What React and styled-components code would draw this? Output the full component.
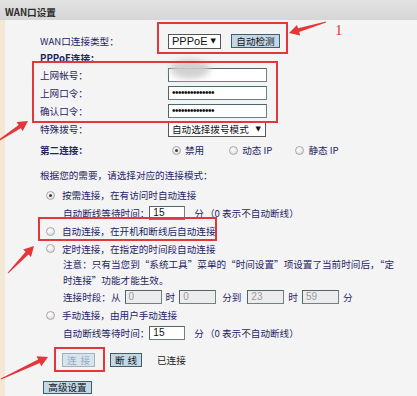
import React from "react";
import styled, { createGlobalStyle } from "styled-components";

const Global = createGlobalStyle`
  html, body { margin: 0; padding: 0; background: #f4f4f4; }
  * { box-sizing: border-box; }
`;

const FONT = `"Noto Sans CJK SC", "Noto Sans", sans-serif`;
const NAVY = "#1f2566";
const RED = "#e3373c";

const Page = styled.div`
  position: relative;
  width: 417px;
  height: 396px;
  overflow: hidden;
  background: #f4f4f4;
  font-family: ${FONT};
  font-size: 9.6px;
  color: ${NAVY};
`;

const Header = styled.div`
  height: 20px;
  padding: 3px 0 0 5px;
  display: flex;
  align-items: center;
  background: linear-gradient(#e2e2e2, #d6d6d6);
  color: #2b2b2b;
  font-weight: bold;
`;

const Body = styled.div`
  display: flex;
  flex-direction: column;
  border-left: 5px solid #f5e7d6;
  padding: 12px 0 0 35px;
  height: 376px;
`;

const Row = styled.div`
  display: flex;
  align-items: center;
  height: ${(p) => p.$h || 18}px;
  margin-top: ${(p) => p.$mt || 0}px;
  padding-left: ${(p) => p.$indent || 0}px;
  gap: ${(p) => p.$gap || 0}px;
  white-space: nowrap;
`;

const Label = styled.span`
  width: 128px;
  flex-shrink: 0;
  font-weight: ${(p) => (p.$bold ? "bold" : "normal")};
`;

const TextInput = styled.div`
  width: ${(p) => p.$w}px;
  height: 14px;
  flex-shrink: 0;
  background: ${(p) => (p.$disabled ? "#ececec" : "#ffffff")};
  border: 1px solid #6b8383;
  border-top-color: #4f6767;
  border-left-color: #4f6767;
  color: ${(p) => (p.$disabled ? "#9a9a9a" : "#111")};
  font-family: "Liberation Sans", sans-serif;
  font-size: 10px;
  line-height: 12px;
  padding-left: 3px;
  letter-spacing: ${(p) => (p.$dots ? "-0.5px" : "0")};
  overflow: hidden;
`;

const Select = styled.div`
  width: ${(p) => p.$w}px;
  height: 15px;
  flex-shrink: 0;
  background: #fff;
  border: 1px solid #555;
  display: flex;
  align-items: center;
  justify-content: space-between;
  padding: 0 4px 0 3px;
  color: #111;
  font-family: ${(p) => (p.$latin ? `"Liberation Sans", sans-serif` : FONT)};
  font-size: ${(p) => (p.$latin ? 11 : 9.6)}px;
`;

const Caret = styled.span`
  font-size: 7px;
  color: #111;
  font-family: "DejaVu Sans", sans-serif;
`;

const Button = styled.div`
  width: ${(p) => p.$w}px;
  height: ${(p) => p.$ht || 14}px;
  margin-left: ${(p) => p.$ml || 0}px;
  flex-shrink: 0;
  display: flex;
  align-items: center;
  justify-content: center;
  background: ${(p) => (p.$disabled ? "#d7e3ed" : "#c3d7e7")};
  border: 1px solid ${(p) => (p.$disabled ? "#9fb2bd" : "#3f5f68")};
  color: ${(p) => (p.$disabled ? "#97acc0" : "#151515")};
  font-size: 9.6px;
  letter-spacing: ${(p) => p.$ls || 0}px;
  padding-left: ${(p) => p.$ls || 0}px;
`;

const Option = styled.span`
  display: inline-flex;
  align-items: center;
  gap: ${(p) => p.$gap || 4}px;
  margin-left: ${(p) => p.$ml || 0}px;
`;

const Radio = styled.span`
  width: 9px;
  height: 9px;
  border-radius: 50%;
  flex-shrink: 0;
  border: 1px solid #a9a9a9;
  background: radial-gradient(circle at 40% 35%, #ffffff 0%, #e8e8e8 55%, #cfcfcf 100%);
  display: flex;
  align-items: center;
  justify-content: center;
  &::after {
    content: "";
    display: ${(p) => (p.$checked ? "block" : "none")};
    width: 3px;
    height: 3px;
    border-radius: 50%;
    background: #3a3a3a;
  }
`;

const Text = styled.span`
  margin-left: ${(p) => p.$ml || 0}px;
  margin-right: ${(p) => p.$mr || 0}px;
  color: ${(p) => p.$color || NAVY};
`;

const Note = styled.div`
  padding-left: 23px;
  line-height: 16px;
  margin-top: -1px;
  white-space: nowrap;
`;

const Mark = styled.div`
  position: absolute;
  left: ${(p) => p.$x}px;
  top: ${(p) => p.$y}px;
  width: ${(p) => p.$w}px;
  height: ${(p) => p.$h}px;
  border: 2px solid ${RED};
  pointer-events: none;
`;

const Blur = styled.div`
  position: absolute;
  left: 170px;
  top: 59px;
  width: 40px;
  height: 20px;
  border-radius: 50%;
  background: #cdcdcd;
  filter: blur(3px);
  opacity: 0.9;
`;

const Number = styled.div`
  position: absolute;
  left: 335px;
  top: 22px;
  font-family: "Liberation Serif", serif;
  font-size: 15px;
  color: ${RED};
`;

const Overlay = styled.svg`
  position: absolute;
  left: 0;
  top: 0;
  pointer-events: none;
`;

function arrow(x1, y1, x2, y2) {
  const dx = x2 - x1;
  const dy = y2 - y1;
  const L = Math.hypot(dx, dy);
  const ux = dx / L;
  const uy = dy / L;
  const nx = -uy;
  const ny = ux;
  const h = 10;
  const bx = x2 - ux * h;
  const by = y2 - uy * h;
  const pts = [
    [x1 + nx * 0.5, y1 + ny * 0.5],
    [bx + nx * 2, by + ny * 2],
    [bx + nx * 5.5, by + ny * 5.5],
    [x2, y2],
    [bx - nx * 5.5, by - ny * 5.5],
    [bx - nx * 2, by - ny * 2],
    [x1 - nx * 0.5, y1 - ny * 0.5],
  ];
  return pts.map((p) => p.map((v) => v.toFixed(1)).join(",")).join(" ");
}

const arrows = [
  [326, 22, 289, 33],
  [-2, 141, 28, 121],
  [8, 273, 34, 246],
  [1, 379, 48, 357],
];

export default function App() {
  return (
    <Page>
      <Global />
      <Header>WAN口设置</Header>
      <Body>
        <Row $h={18}>
          <Label>WAN口连接类型：</Label>
          <Select $w={53} $latin>
            PPPoE <Caret>▼</Caret>
          </Select>
          <Button $w={49} $ml={10}>自动检测</Button>
        </Row>
        <Row $h={16}>
          <Label $bold>PPPoE连接：</Label>
        </Row>
        <Row>
          <Label>上网帐号：</Label>
          <TextInput $w={99}></TextInput>
        </Row>
        <Row>
          <Label>上网口令：</Label>
          <TextInput $w={99} $dots>••••••••••••••</TextInput>
        </Row>
        <Row>
          <Label>确认口令：</Label>
          <TextInput $w={99} $dots>••••••••••••••</TextInput>
        </Row>
        <Row>
          <Label>特殊拨号：</Label>
          <Select $w={98}>
            自动选择拨号模式 <Caret>▼</Caret>
          </Select>
        </Row>
        <Row $mt={3}>
          <Label $bold>第二连接：</Label>
          <Option $ml={4}>
            <Radio $checked />
            禁用
          </Option>
          <Option $ml={25}>
            <Radio />
            动态 IP
          </Option>
          <Option $ml={23}>
            <Radio />
            静态 IP
          </Option>
        </Row>
        <Row $mt={7}>根据您的需要，请选择对应的连接模式：</Row>
        <Row $mt={2} $indent={6}>
          <Option $gap={7}>
            <Radio $checked />
            按需连接，在有访问时自动连接
          </Option>
        </Row>
        <Row $indent={23}>
          <Text>自动断线等待时间：</Text>
          <TextInput $w={36}>15</TextInput>
          <Text $ml={9}>分</Text>
          <Text $ml={1}>（0 表示不自动断线）</Text>
        </Row>
        <Row $indent={6}>
          <Option $gap={7}>
            <Radio />
            自动连接，在开机和断线后自动连接
          </Option>
        </Row>
        <Row $h={17} $indent={6}>
          <Option $gap={7}>
            <Radio />
            定时连接，在指定的时间段自动连接
          </Option>
        </Row>
        <Note>
          注意：只有当您到“系统工具”菜单的“时间设置”项设置了当前时间后，“定
          <br />
          时连接”功能才能生效。
        </Note>
        <Row $indent={23} $gap={4}>
          <Text>连接时段：从</Text>
          <TextInput $w={37} $disabled>0</TextInput>
          <Text>时</Text>
          <TextInput $w={37} $disabled>0</TextInput>
          <Text $ml={2} $mr={2}>分到</Text>
          <TextInput $w={37} $disabled>23</TextInput>
          <Text>时</Text>
          <TextInput $w={37} $disabled>59</TextInput>
          <Text>分</Text>
        </Row>
        <Row $indent={6}>
          <Option $gap={7}>
            <Radio />
            手动连接，由用户手动连接
          </Option>
        </Row>
        <Row $indent={23}>
          <Text>自动断线等待时间：</Text>
          <TextInput $w={36}>15</TextInput>
          <Text $ml={9}>分</Text>
          <Text $ml={1}>（0 表示不自动断线）</Text>
        </Row>
        <Row $mt={9} $indent={22}>
          <Button $w={33} $ls={4} $disabled>连接</Button>
          <Button $w={32} $ls={3} $ml={15}>断线</Button>
          <Text $ml={15} $color="#1a1a1a">已连接</Text>
        </Row>
        <Row $mt={9} $indent={3}>
          <Button $w={49} $ht={13}>高级设置</Button>
        </Row>
      </Body>

      <Blur />
      <Mark $x={157} $y={22} $w={131} $h={32} />
      <Mark $x={32} $y={61} $w={246} $h={62} />
      <Mark $x={38} $y={217} $w={179} $h={24} />
      <Mark $x={54} $y={347} $w={51} $h={25} />
      <Number>1</Number>
      <Overlay width="417" height="396" viewBox="0 0 417 396">
        {arrows.map((a, i) => (
          <polygon key={i} points={arrow(...a)} fill={RED} />
        ))}
      </Overlay>
    </Page>
  );
}
